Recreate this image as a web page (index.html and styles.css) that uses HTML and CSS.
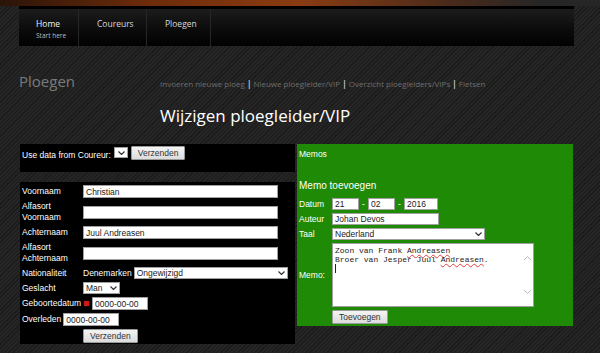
FILE: index.html
```html
<!DOCTYPE html>
<html lang="en">
<head>
    <meta charset="UTF-8">
    <title>Wijzigen ploegleider/VIP</title>
    <link rel="stylesheet" href="styles.css">
</head>
<body>
    <div class="topglow"></div>
    <div class="page">
        <nav class="mainnav">
            <a class="navitem nav-home">
                <span class="navtitle">Home</span>
                <span class="navsub">Start here</span>
            </a>
            <a class="navitem nav-riders"><span class="navtitle">Coureurs</span></a>
            <a class="navitem nav-teams"><span class="navtitle">Ploegen</span></a>
        </nav>

        <div class="subhead">
            <h2 class="section">Ploegen</h2>
            <div class="sublinks">
                <a>Invoeren nieuwe ploeg</a> <span class="sep">|</span>
                <a>Nieuwe ploegleider/VIP</a> <span class="sep">|</span>
                <a>Overzicht ploegleiders/VIPs</a> <span class="sep">|</span>
                <a>Fietsen</a>
            </div>
        </div>

        <h1 class="pagetitle">Wijzigen ploegleider/VIP</h1>

        <div class="columns">
            <div class="leftcol">
                <div class="panel usedata">
                    <span>Use data from Coureur:</span>
                    <span class="selwrap">
                        <select class="sel sel-small"><option></option></select>
                        <svg class="chev" width="7" height="4" viewBox="0 0 7 4"><path d="M0.5 0.5 L3.5 3.5 L6.5 0.5" fill="none" stroke="#333" stroke-width="1.2"/></svg>
                    </span>
                    <button class="btn">Verzenden</button>
                </div>

                <div class="panel personform">
                    <label>Voornaam</label>
                    <input class="txt wide" type="text" value="Christian">

                    <label>Alfasort Voornaam</label>
                    <input class="txt wide" type="text" value="">

                    <label>Achternaam</label>
                    <input class="txt wide" type="text" value="Juul Andreasen">

                    <label>Alfasort Achternaam</label>
                    <input class="txt wide" type="text" value="">

                    <label>Nationaliteit</label>
                    <div class="cell">
                        <span class="country">Denemarken</span>
                        <span class="selwrap">
                            <select class="sel sel-nat"><option>Ongewijzigd</option></select>
                            <svg class="chev" width="7" height="4" viewBox="0 0 7 4"><path d="M0.5 0.5 L3.5 3.5 L6.5 0.5" fill="none" stroke="#333" stroke-width="1.2"/></svg>
                        </span>
                    </div>

                    <label>Geslacht</label>
                    <div class="cell">
                        <span class="selwrap">
                            <select class="sel sel-sex"><option>Man</option></select>
                            <svg class="chev" width="7" height="4" viewBox="0 0 7 4"><path d="M0.5 0.5 L3.5 3.5 L6.5 0.5" fill="none" stroke="#333" stroke-width="1.2"/></svg>
                        </span>
                    </div>

                    <label>Geboortedatum</label>
                    <div class="cell">
                        <span class="req"></span>
                        <input class="txt date" type="text" value="0000-00-00">
                    </div>

                    <div class="fullrow">
                        <label>Overleden</label>
                        <input class="txt date" type="text" value="0000-00-00">
                    </div>

                    <div class="cell btncell">
                        <button class="btn">Verzenden</button>
                    </div>
                </div>
            </div>

            <div class="memos">
                <div class="memos-title">Memos</div>
                <div class="memo-add">Memo toevoegen</div>
                <div class="memoform">
                    <label>Datum</label>
                    <div class="cell">
                        <input class="txt day" type="text" value="21">
                        <span class="dash">-</span>
                        <input class="txt day" type="text" value="02">
                        <span class="dash">-</span>
                        <input class="txt year" type="text" value="2016">
                    </div>

                    <label>Auteur</label>
                    <input class="txt author" type="text" value="Johan Devos">

                    <label>Taal</label>
                    <div class="cell">
                        <span class="selwrap">
                            <select class="sel sel-lang"><option>Nederland</option></select>
                            <svg class="chev" width="7" height="4" viewBox="0 0 7 4"><path d="M0.5 0.5 L3.5 3.5 L6.5 0.5" fill="none" stroke="#333" stroke-width="1.2"/></svg>
                        </span>
                    </div>

                    <label class="memo-label">Memo:</label>
                    <div class="memo-box">
                        <div class="memo-text">Zoon van Frank <span class="typo">Andreasen</span><br>Broer van Jesper Juul <span class="typo">Andreasen</span>.<br><span class="caret"></span></div>
                        <div class="memo-scroll">
                            <svg width="9" height="6" viewBox="0 0 9 6"><path d="M1 5 L4.5 1.5 L8 5" fill="none" stroke="#bbb" stroke-width="1"/></svg>
                            <svg width="9" height="6" viewBox="0 0 9 6"><path d="M1 1 L4.5 4.5 L8 1" fill="none" stroke="#bbb" stroke-width="1"/></svg>
                        </div>
                    </div>

                    <span></span>
                    <div class="cell">
                        <button class="btn">Toevoegen</button>
                    </div>
                </div>
            </div>
        </div>
    </div>
</body>
</html>
```

FILE: styles.css
```css
body {
    margin: 0;
    padding: 0;
    font-family: "Liberation Sans", Arial, sans-serif;
    font-size: 8.5px;
    color: #fff;
    background-color: #1e1e1e;
    background-image: repeating-linear-gradient(135deg, #1b1b1b 0, #1b1b1b 1px, #252525 1px, #252525 3px);
    height: 353px;
    overflow: hidden;
}
.topglow {
    height: 6px;
    background: linear-gradient(to right, #2a1408 0%, #6e2c0a 25%, #8a3c12 50%, #4a2a1a 75%, #262626 90%);
}
.page {
    padding-left: 19px;
    width: 555px;
}
.mainnav {
    display: flex;
    height: 37px;
    border-top: 3px solid #000;
    background: linear-gradient(to bottom, #1c1c1c 0%, #0a0a0a 60%, #020202 100%);
}
.navitem {
    box-sizing: border-box;
    display: flex;
    flex-direction: column;
    padding: 8px 0 0 17px;
    border-right: 1px solid #262626;
    color: #d8d8d8;
    font-family: "Open Sans", sans-serif;
    white-space: nowrap;
}
.nav-home {
    width: 60px;
    color: #f2f2f2;
}
.nav-riders {
    width: 68px;
    padding-left: 18px;
}
.nav-teams {
    width: 64px;
    padding-left: 18px;
}
.navtitle {
    font-size: 8.5px;
    line-height: 14px;
}
.navsub {
    font-size: 6.5px;
    line-height: 10px;
    color: #bbb;
}
.subhead {
    display: flex;
    align-items: baseline;
    margin-top: 25px;
}
.section {
    margin: 0;
    width: 141px;
    font-family: "Open Sans", sans-serif;
    font-weight: normal;
    font-size: 15px;
    color: #7a7a7a;
}
.sublinks {
    font-family: "Open Sans", sans-serif;
    font-size: 8px;
    color: #6e6e6e;
}
.sublinks .sep {
    color: #cfcfcf;
    font-weight: bold;
}
.pagetitle {
    margin: 14px 0 0 141px;
    font-family: "Open Sans", sans-serif;
    font-weight: normal;
    font-size: 17px;
    line-height: 22px;
    color: #fff;
}
.columns {
    display: flex;
    gap: 2px;
    margin-top: 17px;
    margin-left: 1px;
}
.leftcol {
    width: 275px;
    display: flex;
    flex-direction: column;
    gap: 10px;
}
.panel {
    background: #000;
}
.usedata {
    height: 26px;
    padding: 2px 0 0 2px;
    display: flex;
    align-items: flex-start;
    gap: 3px;
}
.usedata > span:first-child {
    margin-top: 4px;
}
.usedata .selwrap {
    margin-top: 1px;
}
.personform {
    display: grid;
    grid-template-columns: 61px 1fr;
    row-gap: 3px;
    align-items: center;
    padding: 3px 0 1px 2px;
}
.personform label {
    line-height: 11px;
}
.cell {
    display: flex;
    align-items: center;
}
.fullrow {
    grid-column: 1 / -1;
    display: flex;
    align-items: center;
    gap: 2px;
}
.btncell {
    grid-column: 2;
}
.txt {
    box-sizing: border-box;
    height: 13px;
    margin: 0;
    padding: 0 2px;
    border: 1px solid #a0a0a0;
    background: #fff;
    font-family: "Liberation Sans", Arial, sans-serif;
    font-size: 8.5px;
    color: #222;
}
.wide {
    width: 195px;
}
.date {
    width: 56px;
}
.req {
    width: 5px;
    height: 5px;
    margin: 0 3px 0 1px;
    border-radius: 1px;
    background: #d01818;
    box-shadow: 0 0 1px #ff5050;
}
.country {
    margin-right: 2px;
}
.selwrap {
    position: relative;
    display: inline-flex;
}
.chev {
    position: absolute;
    right: 3px;
    top: 4px;
    pointer-events: none;
}
.sel {
    appearance: none;
    -webkit-appearance: none;
    box-sizing: border-box;
    height: 12px;
    margin: 0;
    padding: 0 10px 0 2px;
    border: 1px solid #a0a0a0;
    border-radius: 0;
    background: #fff;
    font-family: "Liberation Sans", Arial, sans-serif;
    font-size: 8.5px;
    line-height: 10px;
    color: #222;
}
.sel-small {
    width: 14px;
    height: 11px;
    padding: 0;
}
.usedata .chev {
    right: 3px;
    top: 3.5px;
}
.sel-nat {
    width: 154px;
}
.sel-sex {
    width: 37px;
}
.sel-lang {
    width: 153px;
}
.btn {
    box-sizing: border-box;
    height: 14px;
    padding: 0 6px;
    border: 1px solid #9a9a9a;
    border-radius: 1px;
    background: linear-gradient(to bottom, #f4f4f4, #dcdcdc);
    font-family: "Liberation Sans", Arial, sans-serif;
    font-size: 8.5px;
    color: #333;
}
.memos {
    width: 274px;
    height: 182px;
    padding-left: 2px;
    background: #1f8a06;
}
.memos-title {
    margin-top: 4px;
    line-height: 12px;
}
.memo-add {
    margin-top: 19px;
    font-size: 10px;
    line-height: 13px;
}
.memoform {
    display: grid;
    grid-template-columns: 33px 1fr;
    row-gap: 3px;
    align-items: center;
    margin-top: 6px;
}
.memoform label {
    line-height: 11px;
}
.memoform .txt {
    height: 12px;
}
.day {
    width: 27px;
}
.year {
    width: 34px;
}
.dash {
    width: 9px;
    text-align: center;
}
.author {
    width: 107px;
}
.memo-box {
    display: flex;
    box-sizing: border-box;
    width: 202px;
    height: 64px;
    border: 1px solid #a0a0a0;
    background: #fff;
}
.memo-text {
    flex: 1;
    padding: 2px 2px;
    font-family: "Liberation Mono", "Courier New", monospace;
    font-size: 8px;
    line-height: 9px;
    color: #222;
}
.typo {
    text-decoration: underline wavy #e04040;
    text-decoration-thickness: 1px;
    text-underline-offset: 1px;
}
.caret {
    display: inline-block;
    width: 1px;
    height: 9px;
    background: #222;
}
.memo-scroll {
    width: 12px;
    display: flex;
    flex-direction: column;
    justify-content: space-between;
    align-items: center;
    padding: 11px 0 11px;
}
```
